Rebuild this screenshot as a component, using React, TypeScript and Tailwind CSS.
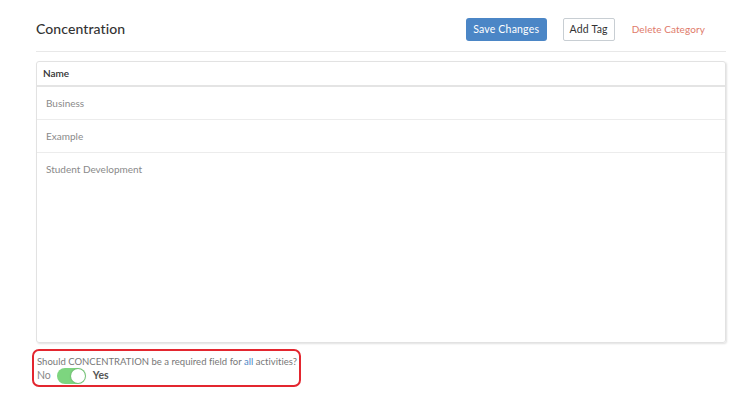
import React, { useState } from 'react';

const rows = ['Business', 'Example', 'Student Development'];

const App: React.FC = () => {
  const [required, setRequired] = useState<boolean>(true);

  return (
    <div className="min-h-screen w-[751px] bg-white font-['Lato',sans-serif]">
      <div className="w-[690px] ml-[36px] pt-[18px]">
        {/* Cabeçalho */}
        <div className="flex items-center h-[23px]">
          <h1 className="mb-[3px] text-[14px] text-[#333] font-medium tracking-[0.1px]">Concentration</h1>
          <div className="ml-auto flex items-center">
            <button className="h-[23px] w-[81px] rounded-[3px] bg-[#4b86c6] text-white text-[10.5px] tracking-[0.2px]">
              Save Changes
            </button>
            <button className="ml-[16px] h-[23px] w-[52px] rounded-[2px] border border-[#c8ced3] bg-white text-[#333] text-[10.5px] tracking-[0.2px]">
              Add Tag
            </button>
            <button className="ml-[17px] mr-[21px] text-[10px] tracking-[0.1px] text-[#e07a6a]">Delete Category</button>
          </div>
        </div>
        <div className="mt-[10px] border-t border-[#e8e8e8]" />

        {/* Tabela */}
        <div className="mt-[9px] h-[282px] rounded-[3px] border border-[#e2e2e2] shadow-[1px_1px_2px_rgba(0,0,0,0.12)]">
          <div className="h-[25px] flex items-center pl-[6px] border-b-2 border-[#e4e4e4] text-[10px] font-semibold text-[#333]">
            Name
          </div>
          {rows.map((r, i) => (
            <div
              key={r}
              className={`h-[33px] flex items-center pl-[9px] text-[10px] text-[#8a8a8a] ${
                i < rows.length - 1 ? 'border-b border-[#ececec]' : ''
              }`}
            >
              {r}
            </div>
          ))}
        </div>
      </div>

      {/* Campo obrigatório */}
      <div className="ml-[32px] mt-[6px] w-[269px] h-[38px] rounded-[7px] border-2 border-[#e3262f] pl-[3px] pt-[4px]">
        <p className="whitespace-nowrap text-[9.5px] tracking-[0.02px] text-[#777] leading-[13px]">
          Should CONCENTRATION be a required field for <span className="text-[#4b86c6]">all</span> activities?
        </p>
        <div className="flex items-center text-[10.5px]">
          <span className="text-[#888]">No</span>
          <button
            onClick={() => setRequired(!required)}
            className={`ml-[6px] w-[29px] h-[16px] rounded-full flex items-center px-[1px] ${
              required ? 'bg-[#7dd57f] justify-end' : 'bg-[#ccc] justify-start'
            }`}
          >
            <span className="block w-[14px] h-[14px] rounded-full bg-white shadow-[0_0_2px_rgba(0,0,0,0.3)]" />
          </button>
          <span className="ml-[7px] font-bold text-[#555]">Yes</span>
        </div>
      </div>
    </div>
  );
};

export default App;
